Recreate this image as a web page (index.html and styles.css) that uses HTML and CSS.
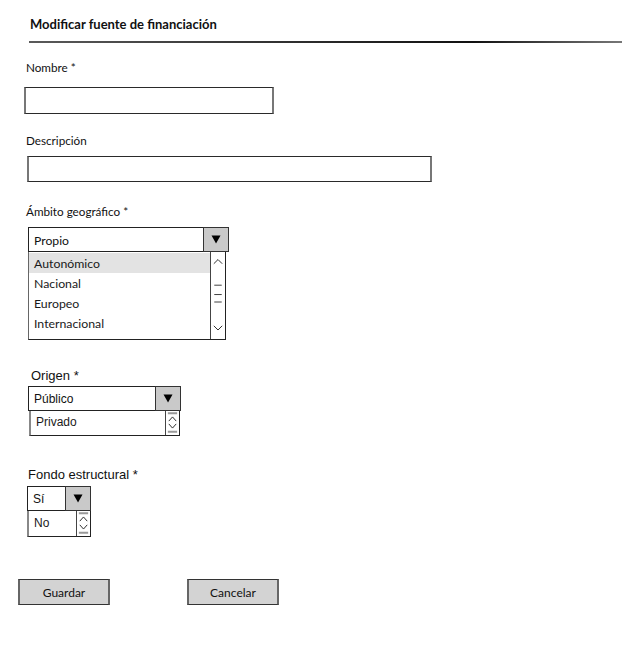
FILE: index.html
```html
<!DOCTYPE html>
<html lang="es">
<head>
<meta charset="utf-8">
<title>Modificar fuente de financiación</title>
<link rel="stylesheet" href="styles.css">
</head>
<body>
<div class="page">
  <h1 class="title">Modificar fuente de financiación</h1>
  <div class="rule"></div>

  <label class="lbl lbl-nombre">Nombre *</label>
  <div class="input input-nombre"></div>

  <label class="lbl lbl-desc">Descripción</label>
  <div class="input input-desc"></div>

  <label class="lbl lbl-ambito">Ámbito geográfico *</label>
  <div class="combo combo-ambito">
    <div class="select">
      <span class="value">Propio</span>
      <span class="btn"><svg width="10" height="9" viewBox="0 0 10 9"><path d="M0.5 0.5h9L5 8.5z" fill="#000"/></svg></span>
    </div>
    <div class="list list-ambito">
      <div class="items">
        <div class="item sel">Autonómico</div>
        <div class="item">Nacional</div>
        <div class="item">Europeo</div>
        <div class="item">Internacional</div>
      </div>
      <div class="scroll scroll-big">
        <svg width="15" height="86" viewBox="0 0 15 86">
          <path d="M3 9.5 L7.5 5 L12 9.5" fill="none" stroke="#222" stroke-width="1"/>
          <path d="M3.5 32.5h8M3.5 42.5h8M3.5 50.5h8" stroke="#333" stroke-width="1"/>
          <path d="M3 76 L7.5 80.5 L12 76" fill="none" stroke="#222" stroke-width="1"/>
        </svg>
      </div>
    </div>
  </div>

  <label class="lbl-arial lbl-origen">Origen *</label>
  <div class="combo combo-origen">
    <div class="select">
      <span class="value arial">Público</span>
      <span class="btn"><svg width="10" height="9" viewBox="0 0 10 9"><path d="M0.5 0.5h9L5 8.5z" fill="#000"/></svg></span>
    </div>
    <div class="list list-origen">
      <div class="items"><div class="item arial">Privado</div></div>
      <div class="scroll scroll-small">
        <svg width="14" height="23" viewBox="0 0 14 23">
          <path d="M2 1.5h10M2 21.5h10" stroke="#999" stroke-width="2"/>
          <path d="M3 10 L7 5.5 L11 10 M3 13 L7 17.5 L11 13" fill="none" stroke="#222" stroke-width="1"/>
        </svg>
      </div>
    </div>
  </div>

  <label class="lbl-arial lbl-fondo">Fondo estructural *</label>
  <div class="combo combo-fondo">
    <div class="select">
      <span class="value arial">Sí</span>
      <span class="btn"><svg width="10" height="9" viewBox="0 0 10 9"><path d="M0.5 0.5h9L5 8.5z" fill="#000"/></svg></span>
    </div>
    <div class="list list-fondo">
      <div class="items"><div class="item arial">No</div></div>
      <div class="scroll scroll-small">
        <svg width="14" height="24" viewBox="0 0 14 24">
          <path d="M2 1.5h10M2 22.5h10" stroke="#999" stroke-width="2"/>
          <path d="M3 10 L7 5.5 L11 10 M3 14 L7 18.5 L11 14" fill="none" stroke="#222" stroke-width="1"/>
        </svg>
      </div>
    </div>
  </div>

  <div class="actions">
    <button class="button">Guardar</button>
    <button class="button">Cancelar</button>
  </div>
</div>
</body>
</html>
```
FILE: styles.css
```css
* { box-sizing: border-box; }
html, body { margin: 0; padding: 0; background: #fff; }
body { font-family: Lato, "Open Sans", sans-serif; color: #111; }
.page { width: 641px; height: 660px; overflow: hidden; }

.title {
  margin: 16px 0 0 30px;
  font-size: 13px;
  line-height: 16px;
  font-weight: 700;
  color: #111;
}
.rule {
  margin: 9px 0 0 29px;
  width: 593px;
  height: 2px;
  background: linear-gradient(90deg, #5a5a5a 0%, #333 40%, #111 75%, #777 100%);
}

.lbl {
  display: block;
  font-size: 11.7px;
  line-height: 14px;
  color: #111;
  margin-left: 26px;
}
.lbl-nombre { margin-top: 17px; }
.lbl-desc { margin-top: 19px; }
.lbl-ambito { margin-top: 22px; }

.input {
  border: 1px solid #2a2a2a;
  border-left: 2px solid #777;
  border-right: 2px solid #777;
  background: #fff;
}
.input-nombre { margin: 13px 0 0 24px; width: 250px; height: 27px; }
.input-desc { margin: 9px 0 0 27px; width: 405px; height: 26px; }

.combo { display: flex; flex-direction: column; }
.combo-ambito { margin: 9px 0 0 28px; width: 201px; }
.combo-origen { margin: 3px 0 0 28px; width: 153px; }
.combo-fondo { margin: 4px 0 0 27px; width: 64px; }

.select { display: flex; height: 25px; }
.value {
  flex: 1;
  display: flex;
  align-items: center;
  padding: 1px 0 0 5px;
  font-size: 12.2px;
  border: 1px solid #222;
  border-right: none;
  background: #fff;
}
.btn {
  width: 26px;
  display: flex;
  align-items: center;
  justify-content: center;
  background: #c9c9c9;
  border: 1px solid #333;
}
.arial { font-family: "Liberation Sans", Arial, sans-serif; font-size: 12px; }

.list {
  display: flex;
  border: 1px solid #222;
  border-top: none;
  border-left-color: #666;
  background: #fff;
}
.list-ambito { width: 198px; height: 88px; }
.list-origen { width: 151px; height: 25px; margin-left: 1px; border-left: 2px solid #888; }
.list-fondo { width: 64px; height: 26px; border-left: 2px solid #888; }

.items { flex: 1; display: flex; flex-direction: column; }
.list-ambito .items { padding-top: 1px; }
.item {
  height: 20px;
  line-height: 22px;
  padding-left: 5px;
  font-size: 12.3px;
  color: #1a1a1a;
}
.item.sel { background: #e3e3e3; }
.list-origen .item { height: 24px; line-height: 22px; padding-left: 5px; font-size: 12px; }
.list-fondo .item { height: 25px; line-height: 24px; padding-left: 5px; font-size: 12px; }

.scroll { border-left: 1px solid #444; display: flex; }
.scroll-big { width: 15px; }
.scroll-small { width: 14px; }

.lbl-arial {
  display: block;
  font-family: "Liberation Sans", Arial, sans-serif;
  font-size: 13px;
  line-height: 15px;
  color: #111;
}
.lbl-origen { margin: 28px 0 0 31px; }
.lbl-fondo { margin: 31px 0 0 28px; }

.actions { display: flex; gap: 77px; margin: 42px 0 0 18px; }
.button {
  width: 92px;
  height: 26px;
  padding: 0;
  background: #d3d3d3;
  border: 1px solid #333;
  border-left: 2px solid #666;
  border-right: 2px solid #666;
  font-family: Lato, sans-serif;
  font-size: 12px;
  color: #111;
}
```
